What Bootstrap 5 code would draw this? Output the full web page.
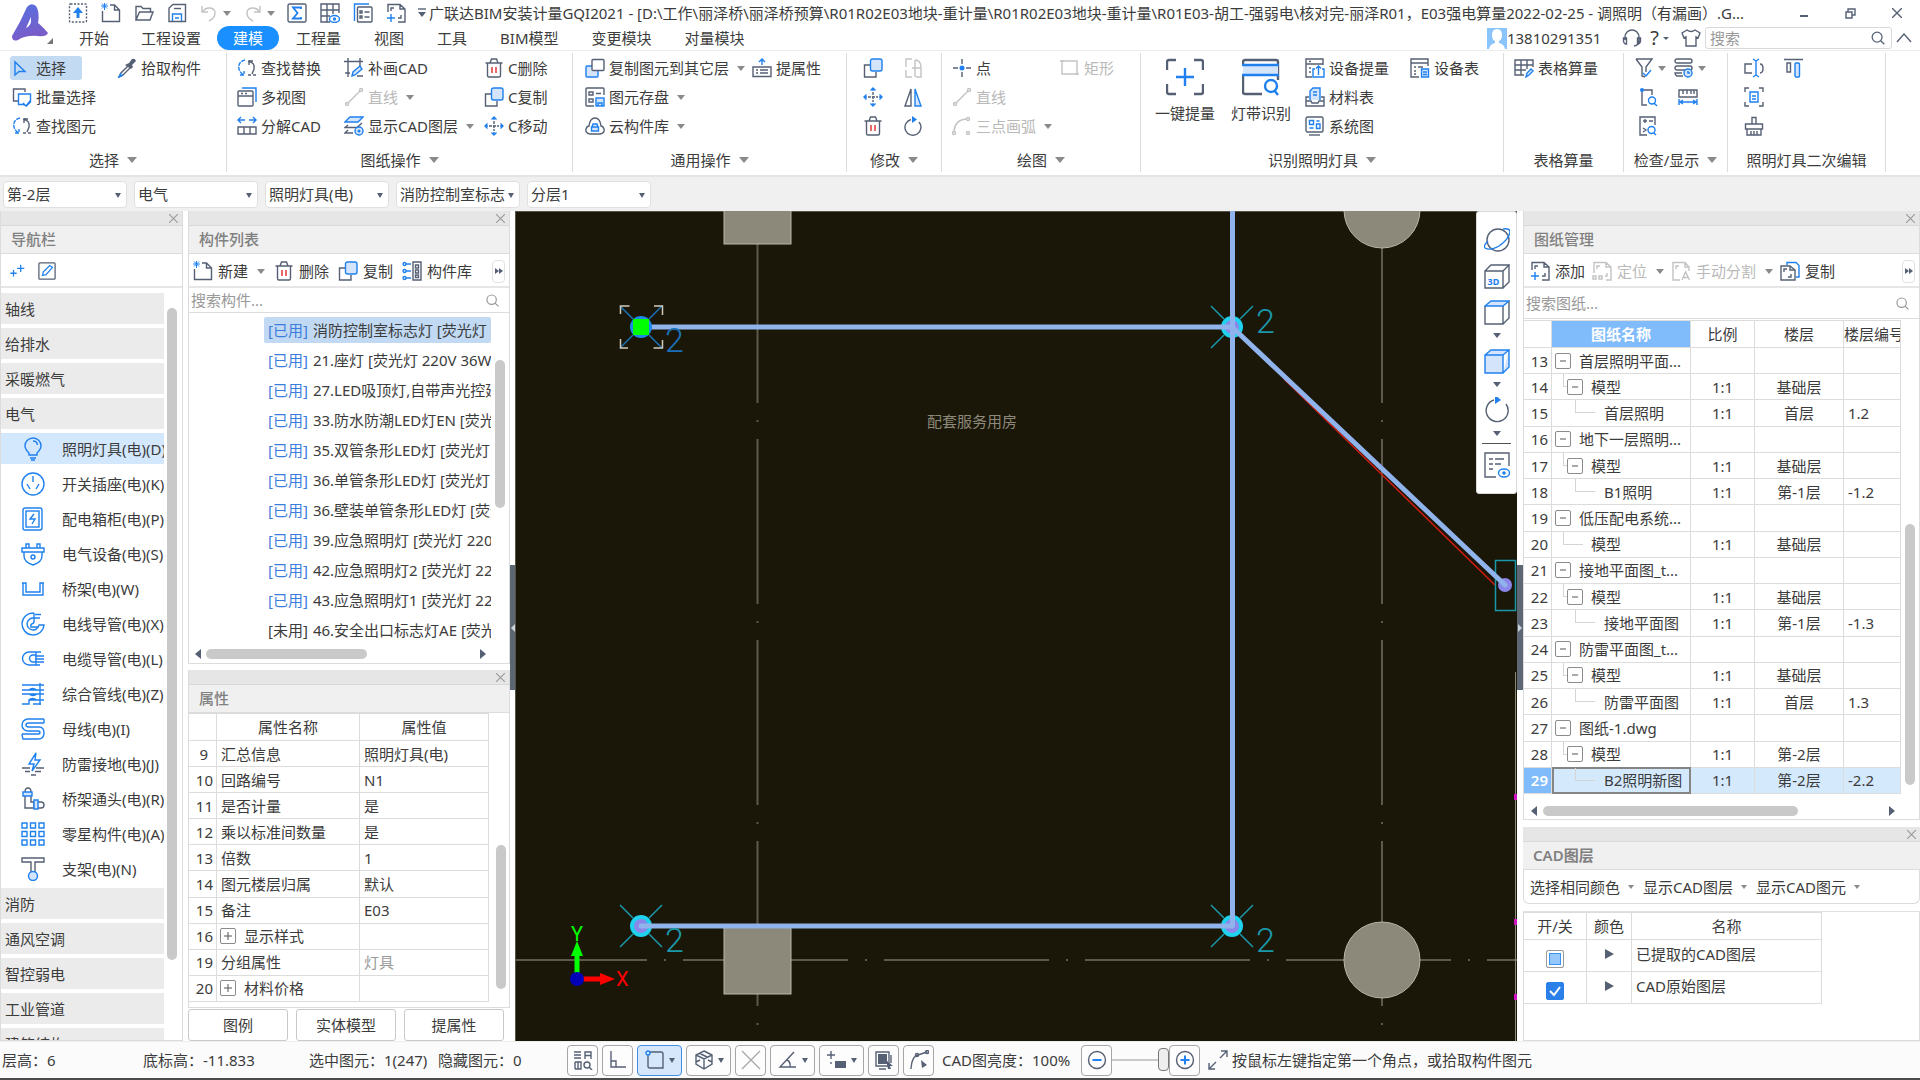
<!DOCTYPE html>
<html lang="zh-CN">
<head>
<meta charset="utf-8">
<meta name="viewport" content="width=device-width, initial-scale=1">
<title>广联达BIM安装计量GQI2021</title>
<link href="https://cdn.jsdelivr.net/npm/bootstrap@5.3.0/dist/css/bootstrap.min.css" rel="stylesheet">
<style>
:root{--ink:#3c3c3c;--ic:#566074;--bl:#1f80ee;--ln:#dcdcdc}
body{font-family:"Noto Sans","Noto Sans CJK SC",sans-serif;font-size:15px;line-height:20px;color:var(--ink);background:#fff}
button,input,select{font:inherit;color:inherit}
button{background:none;border:0;padding:0}
a{color:inherit;text-decoration:none}
svg{display:block;flex:none;overflow:visible}
.ico{width:20px;height:20px;fill:none;stroke:var(--ic);stroke-width:1.4;color:var(--ic)}
.ico18{width:18px;height:18px}
.ico24{width:24px;height:24px}
.ico26{width:26px;height:26px}
.ico38{width:38px;height:38px}
.b{stroke:var(--bl)}.bf{fill:var(--bl);stroke:none}.lf{fill:#d4e5fb}.kf{fill:#566074;stroke:none}.r{stroke:#e02b2b}.w{fill:#fff}
.off{color:#b9b9b9}.off .ico{stroke:#c3c3c3}
.dn{width:0;height:0;border:4px solid transparent;border-top:5px solid #8a8a8a;border-bottom:0;flex:none}
.dn.dk{border-top-color:#566074}
/* header */
.apphead{height:51px;border-bottom:1px solid #ececec}
.logo{width:63px}
.titlerow{height:26px}
.qbar{padding-left:5px;gap:12px}
.qset{display:flex;gap:13px}
.apptitle{margin-left:3px}
.winbtns{gap:36px;padding-right:18px}
.tabs a{padding:2px 16px;height:24px;border-radius:12px}
.tabs a.active{background:#1a8fff;color:#fff}
.tabs a.active~a{margin-left:1px}
.topsearch{width:187px;height:22px;border:1px solid #d9d9d9;border-radius:3px}
.topsearch input,.psearch input{border:0;outline:0;background:none;min-width:0}
input::placeholder{color:#999;opacity:1}
/* ribbon */
.ribbon{height:126px;padding-top:2px;border-bottom:2px solid #e4e4e4}
.grp{height:119px;border-right:1px solid #dcdcdc;padding-top:3px}
.g1{width:227px}.g2{width:346px}.g3{width:274px}.g4{width:95px}.g5{width:199px}.g6{width:363px}.g7{width:120px}.g8{width:104px}.g9{width:158px}
.grp .cols{height:92px;padding-left:8px}
.rc{display:flex;flex-direction:column;align-items:flex-start;gap:5px}
.rb{display:inline-flex;align-items:center;gap:4px;height:24px;padding:0 2px;border-radius:3px;white-space:nowrap}
.rb.on{background:#c3daf3;width:72px}
.rb .dn{margin-left:4px}
.w40{width:40px}.w107{width:107px}.w108{width:108px}.w140{width:140px}.w105{width:105px}.w167{width:167px}
.big{display:flex;flex-direction:column;align-items:center;width:76px;padding-top:2px;gap:7px}
.glabel{height:24px;gap:8px;display:flex;align-items:center;justify-content:center}
.glabel .dn{border-width:5px;border-top-width:6px;border-bottom-width:0}
/* selectors */
.combos{height:34px;background:#f0f0f0;padding:0 3px;gap:7px}
.combo{position:relative;width:124px}
.combo select{appearance:none;width:100%;height:27px;border:1px solid #e0e0e0;border-radius:4px;background:#fff;padding:0 14px 0 3px}
.combo::after{content:"";position:absolute;right:6px;top:12px;border:3px solid transparent;border-top:5px solid #566074;border-bottom:0}
/* panels */
.strip{height:15px;background:#e6e6e6;border-bottom:1px solid #d9d9d9;padding-right:4px;flex:none}
.strip .ico{width:9px;height:9px;stroke:#999;stroke-width:1.2}
.ptitle{height:28px;background:#f0f0f0;color:#808080;font-weight:500;padding:0 10px 1px;border-bottom:1px solid var(--ln);flex:none}
.pbar{height:34px;padding-top:2px;border-bottom:2px solid #e6e6e6;flex:none}
.pbar>button{display:flex;align-items:center;gap:5px}
.pane{border:1px solid var(--ln);border-top:0}
.navcol{width:183px}.listcol{width:322px}.rightcol{width:397px}
.gapl{width:5px}.gapr{width:6px}.gapr,.gapl{padding-top:354px}
.grip{height:125px;background:#5d6773}
.sb{width:10px;border-radius:5px;background:#c9c9c9}
.sbh{height:10px;border-radius:5px;background:#c9c9c9}
.tri{width:0;height:0;border:5px solid transparent}
.tri.l{border-right:6px solid #566074;border-left:0}
.tri.rt{border-left:6px solid #566074;border-right:0}
.navlist{padding-top:5px}
.navlist .items{width:163px;display:flex;flex-direction:column;gap:4px}
.navlist a{height:31px;flex:none;display:flex;align-items:center;white-space:nowrap;overflow:hidden}
.nh{background:#ebebeb;padding-left:4px}
.ni{padding-left:20px;gap:17px}
.ni.active{background:#d3e7fd}
.psearch{height:25px;border-bottom:1px solid var(--ln);padding:0 8px 0 2px;flex:none}
.psearch .ico{width:17px;height:17px;stroke:#999}
.comps{width:227px;margin-left:75px;padding-top:4px;gap:4px}
.comps a{height:26px;flex:none;display:block;padding:3px 4px;white-space:nowrap;overflow:hidden;border-radius:2px}
.comps a.active{background:#c1d9f2}
.comps i{font-style:normal;color:#3b7ddd;margin-right:5px}
.comps i.un{color:inherit}
.grid{--bs-table-bg:transparent;table-layout:fixed;border-collapse:collapse;margin:0;color:var(--ink);border-color:var(--ln)}
.grid th,.grid td{padding:0 4px;border:1px solid var(--ln);font-weight:400;white-space:nowrap;overflow:hidden;vertical-align:middle;color:var(--ink);line-height:20px}
.grid th{text-align:center}
.grid thead tr{height:27px}
.props{width:300px;height:289px}
.grid .no{padding:0 3px 0 0;text-align:right}
.pm{display:inline-flex;width:16px;height:16px;border:1px solid #8b8b8b;border-radius:2px;align-items:center;justify-content:center;vertical-align:top;margin:2px 8px 0 0;background:#fff}
.pm svg{width:8px;height:8px;stroke:#555;stroke-width:1}
.grid .exp{padding-left:3px}
.pbtn{height:32px;width:100px;border:1px solid #c9c9c9;border-radius:3px}
.draws{width:377px;height:474px;margin-left:-1px}
.draws th{padding:0}
.draws td:nth-child(3),.draws td:nth-child(4){text-align:center}
.draws .l0{padding-left:3px}.draws .l1{padding-left:15px;position:relative}.draws .l2{padding-left:52px;position:relative}
.draws .l1.leaf{padding-left:39px}
.draws .l1::before,.draws .l2::before{content:"";position:absolute;left:11px;top:0;width:4px;height:13px;border:1px solid #d5d5d5;border-width:0 0 1px 1px}
.draws .l1.leaf::before{width:20px}
.draws .l2::before{left:23px;width:20px}
.draws .cur td{background:#d5e9fd}
.draws th.hd,.draws .cur td.hd{background:#80bcfb;color:#fff;font-weight:600}
.draws .cur td.l2{outline:2px solid #858585;outline-offset:-2px}
.pbar>.more{width:13px;height:23px;border:1px solid #e2e2e2;border-radius:4px;gap:0;justify-content:center;margin:0 4px 0 auto}
.more .tri{border-width:3px 0 3px 4px}
.layers{width:298px}
.layers td{height:32px}
.layers td:nth-child(3){padding-bottom:3px}
.layers .tri{border-left-width:9px;display:block;margin:0 auto 3px}
.layerbar{height:34px;padding-left:6px;gap:9px}
.layerbar .dn{border-width:4px 3px 0}
.ck{appearance:none;width:18px;height:18px;border:1px solid #9a9a9a;border-radius:2px;display:block;margin:6px auto 0;background:#fff}
.ck.part{background:#97c8fb;box-shadow:inset 0 0 0 2px #fff,inset 0 0 0 3px #3b93f0}
.ckw{position:relative}
.ck.yes{background:#2a80e8;border-color:#2a80e8}
.ckw svg{position:absolute;left:50%;top:50%;width:14px;height:14px;margin:-4px 0 0 -7px;fill:none;stroke:#fff;stroke-width:2;pointer-events:none}
/* drawing area */
.stage{background:#1a1608;position:relative;overflow:hidden}
.stage>svg{width:100%;height:100%;position:absolute;inset:0}
.stage text{font-family:Roboto,"Noto Sans CJK SC",sans-serif}
.float{position:absolute;right:0;top:0;width:41px;height:283px;background:#fff;border:1px solid #d9d9d9;border-radius:3px;padding-top:15px;display:flex;flex-direction:column;align-items:center;gap:10px}
.float .set{display:flex;flex-direction:column;align-items:center;gap:8px}
.float hr{width:29px;margin:-3px 0 -2px;border-top:1px solid #555;opacity:1}
.tag3d{font-size:9px;line-height:14px;color:var(--bl)}
/* status */
.status{height:39px;background:#fbfbfb;border-bottom:2px solid #4c4c4c;border-top:1px solid #eee;padding-left:2px}
.sbtn{height:31px;min-width:31px;border:1px solid #a6a6a6;border-radius:4px;display:inline-flex;align-items:center;justify-content:center;gap:4px;background:#fdfdfd;flex:none}
.sbtn.dd{width:45px}
.sbtn.on{background:#d6e7fb;border-color:#3f8fe8}
.sbtn .dn{border-width:3px;border-top-width:5px;border-bottom-width:0}
.s1{width:141px}.s2{width:166px}.s3{width:129px}.s4{width:129px}.s5{width:139px}
.tools{gap:4px}
.bright{width:57px;height:24px;appearance:none;background:none;margin:0}
.bright::-webkit-slider-runnable-track{height:2px;background:#c9c9c9}
.bright::-webkit-slider-thumb{-webkit-appearance:none;width:11px;height:23px;margin-top:-11px;border:1px solid #777;border-radius:4px;background:#eee}
</style>
<script src="https://cdn.jsdelivr.net/npm/bootstrap@5.3.0/dist/js/bootstrap.bundle.min.js"></script>
</head>
<body class="vh-100 d-flex flex-column overflow-hidden">
<svg width="0" height="0" class="position-absolute" aria-hidden="true"><defs>
<symbol id="x" viewBox="0 0 10 10"><path d="M0 0l10 10M10 0L0 10"/></symbol>
<symbol id="mag" viewBox="0 0 20 20"><circle cx="9" cy="9" r="5.5"/><path d="M13 13l4 4"/></symbol>
<symbol id="up" viewBox="0 0 20 20"><rect x="1.500" y="1" width="17" height="18" rx="1" stroke-dasharray="2 1.500"/><path class="bf" d="M10 4l5 6h-3.500v5h-3v-5H5z"/></symbol>
<symbol id="new" viewBox="0 0 20 20"><path d="M1.500 8v10.500h17V7l-5-5H9M13.500 2v5h5"/><path class="b" stroke-width="1" d="M0 3h7M3.500 0v7M1 .500l5 5M6 .500l-5 5"/></symbol>
<symbol id="open" viewBox="0 0 20 20"><path d="M2 17V3.500h5l2 2h7.500V9M2 17L5.500 9H19l-3 8z"/></symbol>
<symbol id="save" viewBox="0 0 20 20"><path d="M2 18.500V5l4-3.500h12.500v17z"/><path class="b" d="M5.500 18v-7h9v7M8 15h4"/><path d="M7 5.500h7"/></symbol>
<symbol id="undo" viewBox="0 0 20 20"><path d="M3 3v6h6M3.500 9C7 3 16 4 16 10c0 4-2 6-6 8"/></symbol>
<symbol id="redo" viewBox="0 0 20 20"><path d="M17 3v6h-6M16.500 9C13 3 4 4 4 10c0 4 2 6 6 8"/></symbol>
<symbol id="sum" viewBox="0 0 20 20"><rect x="1" y="1" width="18" height="18" rx="1.500"/><path class="b" stroke-width="1.800" d="M14 6V4.500H6L10.500 10 6 15.500h8V14"/></symbol>
<symbol id="gridv" viewBox="0 0 20 20"><path d="M19 10V1H1v18h9M1 7h18M1 13h9M7 1v18M13 1v10"/><ellipse class="b" cx="14.500" cy="16" rx="5" ry="3.500"/><circle class="b" cx="14.500" cy="16" r="1"/></symbol>
<symbol id="lists" viewBox="0 0 20 20"><path class="b" d="M16 1H1.500v17"/><rect x="4.500" y="4" width="14.500" height="15" rx="1"/><path d="M7 8h2v2H7zM7 13h2v2H7zM11.500 9h5M11.500 14h5"/></symbol>
<symbol id="addpg" viewBox="0 0 20 20"><path d="M2 9V1.500h12l5 4.500v13h-7M14 1.500V6h5M5 8V5h3M15 12v3h-3"/><path class="b" d="M5 11v8M1 15h8"/></symbol>
<symbol id="cursor" viewBox="0 0 20 20"><path class="b" d="M3 4v13l4-3.500h6z"/></symbol>
<symbol id="multi" viewBox="0 0 20 20"><path d="M7 14H1.500V2H13v3"/><path class="b w" d="M6.500 7h12v8l-4 4-3-1.500H6.500zM11 16l3 3 4-5"/></symbol>
<symbol id="cyc" viewBox="0 0 20 20"><path class="b" d="M8 2C3 3 1 7 2 11s3 4 4 6M3 17h4v-4" stroke-dasharray="4 1"/><path d="M11 3c5 1 7 4 6 8l-2 5M11 17h3M16 17h3M12 3v4M12 3h4"/></symbol>
<symbol id="drop" viewBox="0 0 20 20"><path class="kf" d="M10 6l2-1 3-4q3-1 4 2l-4 4 1 2-2 2-6-4z"/><path d="M11 8l-7 7-2 4 4-2 7-7"/><path class="b" d="M4 15l-2 4 4-2"/></symbol>
<symbol id="win" viewBox="0 0 20 20"><path class="b" d="M5 1h14v14"/><rect x="1" y="4" width="15" height="15" rx="1"/><path d="M1 9h15M4 6.500h2M8 6.500h2"/></symbol>
<symbol id="split" viewBox="0 0 20 20"><path d="M1 18v-7h18v7zM7 11v7M13 11v7"/><path class="b" d="M1 4h7M12 4h7M4 1L1 4l3 3M16 1l3 3-3 3"/></symbol>
<symbol id="cad" viewBox="0 0 20 20"><path d="M0 3.500h19M4 0v19M1 15h5M16 0v8M13 18h6"/><path class="b lf" d="M8 18l1-4 7-6 2 3-7 6z"/></symbol>
<symbol id="line" viewBox="0 0 20 20"><circle cx="3" cy="17" r="1.500"/><circle cx="17" cy="3" r="1.500"/><path d="M4 16L16 4"/></symbol>
<symbol id="layers" viewBox="0 0 20 20"><path class="b lf" d="M6 1h13l-5 5H1z"/><path d="M4 9l-3 2.500h12l5-4.500M4 14l-3 3h8"/><circle class="b lf" cx="15" cy="15" r="4"/><circle class="bf" cx="15" cy="15" r="1.500"/></symbol>
<symbol id="bin" viewBox="0 0 20 20"><path d="M1.500 5h17M3.500 5v12.500q0 1.500 1.500 1.500h10q1.500 0 1.500-1.500V5M6 5l1.500-4h5L14 5"/><path class="r" d="M8 9v6M12 9v6"/></symbol>
<symbol id="copy" viewBox="0 0 20 20"><path d="M7 7H1.500v12H13v-5"/><rect class="b lf" x="7.500" y="1" width="11.500" height="12" rx="2"/></symbol>
<symbol id="copy2" viewBox="0 0 20 20"><rect class="b lf" x="1" y="8" width="12" height="11" rx="1"/><rect class="w" x="7" y="1.500" width="12" height="11" rx="1"/></symbol>
<symbol id="move" viewBox="0 0 20 20"><path d="M10 5v10M5 10h10" stroke-dasharray="3 1"/><path class="b" d="M7.500 3.500L10 1l2.500 2.500M7.500 16.500L10 19l2.500-2.500M3.500 7.500L1 10l2.500 2.500M16.500 7.500L19 10l-2.500 2.500M10 1v3M10 19v-3M1 10h3M19 10h-3"/></symbol>
<symbol id="store" viewBox="0 0 20 20"><path d="M9 19H2q-1 0-1-1V2q0-1 1-1h16q1 0 1 1v6M4 5h4v3H4zM4 12h4v3H4zM11 6.500h5"/><rect class="b lf" x="11" y="11" width="8" height="8"/><path class="b" d="M13 19v-3h4v3"/></symbol>
<symbol id="cloud" viewBox="0 0 20 20"><path d="M5 18q-5-1-4-5 1-3 3-3 1-8 6-8t6 8q2 0 3 3 1 4-4 5z"/><path class="b lf" d="M6.500 11h7v4h-7zM8 8h4l1 3H7z"/></symbol>
<symbol id="attr" viewBox="0 0 20 20"><path d="M1 18.500V9h18v9.500zM4 12h2M8 12h8M4 15h2M8 15h8"/><path class="b" d="M10 7V1M7 4l3-3 3 3"/></symbol>
<symbol id="doc2" viewBox="0 0 20 20"><path d="M9 1H3v8M3 12v7h6M12 2q6 0 6 8v9h-5M9 10h9M12 2v17"/></symbol>
<symbol id="mirror" viewBox="0 0 20 20"><path d="M8 2v17H2z"/><path class="b lf" d="M12 2v17h6z"/></symbol>
<symbol id="rot" viewBox="0 0 20 20"><path d="M8 3.500a8 8 0 1 0 8 2.500"/><path class="bf" d="M9 0l5 3.500L9 7z"/></symbol>
<symbol id="pt" viewBox="0 0 20 20"><path d="M10 1v5M10 14v5M1 10h5M14 10h5"/><circle class="bf" cx="10" cy="10" r="2.500"/></symbol>
<symbol id="rect" viewBox="0 0 20 20"><path d="M2 3h15v13H2z"/><path d="M0 3h4M15 16h4"/></symbol>
<symbol id="arc" viewBox="0 0 20 20"><circle cx="2" cy="17" r="1.500"/><circle cx="16" cy="3" r="1.500"/><circle cx="16" cy="17" r="1.500"/><path d="M2 15Q3 4 14 3"/></symbol>
<symbol id="onekey" viewBox="0 0 38 38"><g stroke-width="2.400"><path d="M1 12V4q0-2 2-2h7M28 2h7q2 0 2 2v8M37 26v8q0 2-2 2h-7M10 36H3q-2 0-2-2v-8"/><path class="b" d="M19 10v18M10 19h18"/></g></symbol>
<symbol id="strip" viewBox="0 0 38 38"><g stroke-width="2.400"><path d="M1 8V4q0-2 2-2h31q2 0 2 2v18M1 16v18q0 2 2 2h17"/><path class="lf" stroke="none" d="M1 8h35v9H1z"/><path class="b" d="M0 7h37M0 17h37"/><circle class="b" cx="29" cy="28" r="6"/><path class="b" d="M32 32l4 5"/></g></symbol>
<symbol id="eqx" viewBox="0 0 20 20"><path d="M7 19H1V1h17v6M1 6h17M4 3.500h2M4 10h2M4 14h2"/><path class="b" d="M10 11H8v8h11v-8h-2M13.500 17V8M11 10.500L13.500 8l2.500 2.500"/></symbol>
<symbol id="eqt" viewBox="0 0 20 20"><path d="M9 19H1V1h17v7M1 5h17M4 9h2M8 9h5M4 13h2M4 16h2"/><path class="b lf" d="M11.500 11h7v8h-7zM13 14h4M13 16.500h4"/></symbol>
<symbol id="mat" viewBox="0 0 20 20"><path d="M4 10H1v9h18v-9h-3M1 14h5l1 2h6l1-2h5"/><path class="b lf" d="M5 13V4l3-3h7v12M8 5h4M8 8h4"/></symbol>
<symbol id="sys" viewBox="0 0 20 20"><rect x="1" y="1" width="17" height="15" rx="1.500"/><path class="b" d="M4.500 4.500h4v4h-4zM4.500 12h4M11.500 5h3M11.500 8h3.500v4.500h-3.500z"/><path d="M4 19h11"/></symbol>
<symbol id="tbl" viewBox="0 0 20 20"><path d="M10 17H1V2h18v7M1 7h18M1 12h11M7 2v15M13 2v9"/><path class="b lf" d="M12 19l1-4 4-4 2 2-4 4z"/></symbol>
<symbol id="filt" viewBox="0 0 20 20"><path d="M2 1h16l-6 8v5M2 1l6 8v9l3 1"/><path class="b" d="M9 15l3 3 5-6"/></symbol>
<symbol id="bars" viewBox="0 0 20 20"><rect x="1" y="1" width="17" height="4" rx="2"/><rect x="1" y="8" width="17" height="4" rx="2"/><path d="M9 18H3q-2-1-2-3h7"/><circle class="b lf" cx="14" cy="15" r="4"/><path class="b" d="M14 13v2h2"/></symbol>
<symbol id="find1" viewBox="0 0 20 20"><path d="M5 3h9v5M4 4v14h5"/><circle class="bf" cx="4" cy="3" r="2"/><circle class="b" cx="14" cy="13.500" r="3.500"/><path class="b" d="M16 16l3 3"/></symbol>
<symbol id="ruler" viewBox="0 0 20 20"><path d="M1 3h18v7H1zM5 3v4M9 3v4M13 3v4M16 3v4"/><path class="b" d="M1 12v6M19 12v6M2 15h16M5 13l-3 2 3 2M15 13l3 2-3 2"/></symbol>
<symbol id="calc" viewBox="0 0 20 20"><path d="M9 19H2V1h15v8M5 5h4M7 3v4M11 5h4M5 12l3 2-3 2"/><circle class="b" cx="13.500" cy="14" r="3.500"/><path class="b" d="M16 17l2 2"/></symbol>
<symbol id="brk" viewBox="0 0 20 20"><path d="M8 6H1v9h7M16 6q3 0 3 4.500T16 15"/><path class="b" d="M12 2v16M9 1l3 2 3-2M9 19l3-2 3 2"/></symbol>
<symbol id="align" viewBox="0 0 20 20"><path d="M0 1.500h19M3 5h3.500v9H3z"/><rect class="b lf" x="11" y="5" width="4.500" height="14" rx="1"/></symbol>
<symbol id="focus" viewBox="0 0 20 20"><path d="M1 5V1h4M15 1h4v4M19 15v4h-4M5 19H1v-4"/><path class="b" d="M6 5h8v10H6zM8 9h4M8 12h4"/></symbol>
<symbol id="brush" viewBox="0 0 20 20"><path d="M8 8V1.500h4V8M1.500 13V8h17v5zM3 13v6h14v-6M7 15v4M10 15v4M13 15v4"/></symbol>
<symbol id="head" viewBox="0 0 20 20"><path d="M3 12V9a7 7 0 0 1 14 0v4q0 4-5 5M1.500 10h3v6h-1q-2-1-2-3zM18.500 10h-3v6h1q2-1 2-3z"/></symbol>
<symbol id="shirt" viewBox="0 0 20 20"><path d="M6 2L1 5l2 5 2-1v9h10V9l2 1 2-5-5-3q-4 3-8 0z"/></symbol>
<symbol id="plus2" viewBox="0 0 20 20"><path class="b" d="M5 9v7M1.500 12.500h7M13 3v8M9 7h8"/></symbol>
<symbol id="edit" viewBox="0 0 20 20"><rect x="1" y="1" width="18" height="18" rx="1"/><path class="b" d="M5 15l1-4 7-7 3 2-7 8z"/></symbol>
<symbol id="lib" viewBox="0 0 20 20"><path class="b" d="M4 3h5M4 10h5M4 17h5"/><circle class="b" cx="2.500" cy="3" r="1.500"/><circle class="b" cx="2.500" cy="10" r="1.500"/><circle class="b" cx="2.500" cy="17" r="1.500"/><path d="M11 1h8v18h-8zM13.500 4h3v3h-3zM13.500 9h3v3h-3zM13.500 14h3v2.500h-3z"/></symbol>
<symbol id="loc" viewBox="0 0 20 20"><path d="M2 12V1.500h12l5 4.500v13h-5M14 1.500V6h5M5 8V5h3M15 12v3h-2M1 15h3v3H1zM7 15h3v3H7z"/></symbol>
<symbol id="pa" viewBox="0 0 20 20"><path d="M9 19H2V1.500h12l4 4.500v4M14 1.500V6h4M5 8V5h3M11 19l3.500-8 4 8M12 16.500h5"/></symbol>
<symbol id="pcopy" viewBox="0 0 20 20"><path class="b" d="M7 4V1.500h9l3 3V16h-3"/><path class="w" d="M1 19V5h9l5 4v10z"/><path d="M10 5v4h5M4 11V8h3M11 13v3H8"/></symbol>
<symbol id="n1" viewBox="0 0 24 24"><g class="b"><path d="M8 16Q4 12 4 9a8 8 0 0 1 16 0q0 3-4 7v2H8zM9 21h6M10 23h4M12 4q4 0 4.500 4"/></g></symbol>
<symbol id="n2" viewBox="0 0 24 24"><g class="b"><circle cx="12" cy="12" r="11"/><path d="M12 4v6M6 12l3 5M18 12l-3 5"/></g></symbol>
<symbol id="n3" viewBox="0 0 24 24"><g class="b"><rect x="2" y="1" width="19" height="22" rx="2"/><rect x="5" y="4" width="13" height="16"/><path d="M13 7l-4 5h5l-3 5"/></g></symbol>
<symbol id="n4" viewBox="0 0 24 24"><g class="b"><path d="M1 6h22v4H1zM5 6V2h3v4M16 6V2h3v4M3 10v4q0 6 9 9 9-3 9-9v-4"/><circle cx="12" cy="15" r="2"/></g></symbol>
<symbol id="n5" viewBox="0 0 24 24"><path class="b" d="M1 6h4v9h14V6h4M2 6v12h20V6"/></symbol>
<symbol id="n6" viewBox="0 0 24 24"><g class="b"><path d="M13 1a11 11 0 1 0 10 12h-5a6 6 0 1 1-5-7h6M13 1v10M13 11q-4 1-3 4h8M14 2.500h6"/></g></symbol>
<symbol id="n7" viewBox="0 0 24 24"><g class="b"><path d="M20 5H8a6.500 6.500 0 0 0 0 13h11M12 8a3.500 3.500 0 0 0 0 7h4M12 8h3M15 5v13M14 9h9M14 12h9M14 15h9"/></g></symbol>
<symbol id="n8" viewBox="0 0 24 24"><g class="b"><path d="M1 3h22M1 8h22M1 12h22M19 1v22M1 22h7v-4h15M8 18q3-3 8 0M8 8q3-3 8 0M8 12q4 3 8 0M12 22h8"/></g></symbol>
<symbol id="n9" viewBox="0 0 24 24"><path class="b" d="M23 2H7a5.500 5.500 0 0 0 0 12h10q2 0 2 1.500T17 17H1M23 6H8q-3 0-3 2t3 2h10q5 0 5 6t-6 6H2q-1-3-1-5M23 2v4"/></symbol>
<symbol id="n10" viewBox="0 0 24 24"><path class="b" d="M15 1L8 12h5l-2 7 8-11h-5z"/><path d="M1 16h8M15 16h8M4 19.500h5M14 19.500h6M10 23h5"/></symbol>
<symbol id="n11" viewBox="0 0 24 24"><path d="M4 5q0-4 3-4t3 4v10h3v6H4zM17 15h3q3 0 3 3t-3 3h-3"/><path class="b lf" d="M2 5h9v4H2zM13 13h4v9h-4z"/></symbol>
<symbol id="n12" viewBox="0 0 24 24"><path class="b" d="M1 1h5v5H1zM9.500 1h5v5h-5zM18 1h5v5h-5zM1 9.500h5v5H1zM9.500 9.500h5v5h-5zM18 9.500h5v5h-5zM1 18h5v5H1zM9.500 18h5v5h-5zM18 18h5v5h-5z"/></symbol>
<symbol id="n13" viewBox="0 0 24 24"><path d="M1 1h22v4h-9v10h-4V5H1z"/><circle class="b lf" cx="12" cy="19" r="4.500"/></symbol>
<symbol id="orbit" viewBox="0 0 26 26"><circle cx="14" cy="13" r="11"/><path class="b" d="M4 14Q-1 19 1 21 6 24 15 19 25 12 26 5 26 1 19 2"/></symbol>
<symbol id="cube" viewBox="0 0 26 26"><path d="M1 8h18v17H1zM1 8l6-6h18l-6 6M25 2v17l-6 6"/></symbol>
<symbol id="cubet" viewBox="0 0 26 26"><path d="M1 7v18h18V7M25 2v17l-6 6"/><path class="b lf" d="M1 7l6-5h18l-6 5z"/></symbol>
<symbol id="cubeb" viewBox="0 0 26 26"><path class="b lf" d="M1 7h18v18H1zM1 7l6-5h18l-6 5M25 2v17l-6 6"/></symbol>
<symbol id="rotb" viewBox="0 0 26 26"><path d="M10 3a11 11 0 1 0 12 4"/><path class="bf" d="M11-2l6 5-6 4z"/></symbol>
<symbol id="eye" viewBox="0 0 26 26"><path d="M12 25H1V1h24v13M5 7h4M11 7h9M5 12h4M11 12h6M5 17h4"/><ellipse class="b" cx="20" cy="21" rx="5.500" ry="4"/><circle class="bf" cx="20" cy="21" r="1.800"/></symbol>
<symbol id="t1" viewBox="0 0 20 20"><path d="M1 2h7M1 5h7M1 8h7M12 9V2h6v7M12 5.500h6M2 12v7M2 12h6v7H2M5 12v7"/><circle cx="14" cy="15" r="3"/><path d="M16 17l3 3"/></symbol>
<symbol id="t2" viewBox="0 0 20 20"><path d="M3 1v16h15M3 11h5v6"/></symbol>
<symbol id="t3" viewBox="0 0 20 20"><path d="M4 2h12q2 0 2 2v14H5q-2 0-2-2V5"/><circle class="b lf" cx="3" cy="3" r="2"/></symbol>
<symbol id="t4" viewBox="0 0 20 20"><path d="M10 1l8 4v9l-8 5-8-5V5zM2 5l8 4 8-4M10 9v10M5 3l8 4M2 12l4-2M18 12l-4-2"/></symbol>
<symbol id="t5" viewBox="0 0 20 20"><path stroke="#aaa" d="M1 1l18 18M19 1L1 19"/></symbol>
<symbol id="t6" viewBox="0 0 20 20"><path d="M16 2L2 17h16M9 10q4 2 3 7"/></symbol>
<symbol id="t7" viewBox="0 0 20 20"><path d="M4 1v8M0 5h8M4 12v2"/><path class="kf" d="M8 11h11v7H8z"/></symbol>
<symbol id="t8" viewBox="0 0 20 20"><path d="M2 2h13v14H2zM5 19h7M17 5v8"/><path class="kf" d="M4 4h9v10H4zM12 10l7 6-3 0 1 3-3 0z"/></symbol>
<symbol id="t9" viewBox="0 0 20 20"><path d="M2 18Q3 6 9 5L18 2M2 18v1"/><circle cx="8" cy="5" r="1.500"/><circle cx="18" cy="2" r="1.500"/><path class="kf" d="M12 10l6 5-5 3z"/></symbol>
<symbol id="zo" viewBox="0 0 20 20"><circle cx="10" cy="10" r="8.500"/><path class="b" stroke-width="2" d="M5.500 10h9"/></symbol>
<symbol id="zi" viewBox="0 0 20 20"><circle cx="10" cy="10" r="8.500"/><path class="b" stroke-width="2" d="M5.500 10h9M10 5.500v9"/></symbol>
<symbol id="diag" viewBox="0 0 20 20"><path d="M12 8l7-7M13 1h6v6M8 12l-7 7M1 13v6h6"/></symbol>
<linearGradient id="lg" x1="0" y1="0" x2="0.300" y2="1"><stop offset="0" stop-color="#5570e0"/><stop offset="1" stop-color="#7a5cc8"/></linearGradient>
</defs></svg>

<header class="apphead d-flex flex-shrink-0">
  <button class="logo flex-shrink-0" aria-label="应用菜单"><svg width="63" height="50" viewBox="0 0 63 50"><path fill="url(#lg)" fill-rule="evenodd" d="M27 7Q31 2 36 6Q40 12 38 23Q42 26 48 33Q46 37 38 36Q26 35 18 40Q12 42 12 36Q20 23 27 7ZM31 17L26 28Q30 26 31 22Z"/><path fill="#777" d="M53 38v6h-6z"/></svg></button>
  <div class="flex-grow-1 d-flex flex-column">
    <div class="titlerow d-flex align-items-center">
      <div class="qbar d-flex align-items-center">
        <div class="qset">
        <button aria-label="上传"><svg class="ico"><use href="#up"/></svg></button>
        <button aria-label="新建"><svg class="ico"><use href="#new"/></svg></button>
        <button aria-label="打开"><svg class="ico"><use href="#open"/></svg></button>
        <button aria-label="保存"><svg class="ico"><use href="#save"/></svg></button>
        </div>
        <button class="off d-flex align-items-center gap-1" aria-label="撤销"><svg class="ico"><use href="#undo"/></svg><span class="dn"></span></button>
        <button class="off d-flex align-items-center gap-1" aria-label="恢复"><svg class="ico"><use href="#redo"/></svg><span class="dn"></span></button>
        <div class="qset">
        <button aria-label="汇总"><svg class="ico"><use href="#sum"/></svg></button>
        <button aria-label="表格"><svg class="ico"><use href="#gridv"/></svg></button>
        <button aria-label="列表"><svg class="ico"><use href="#lists"/></svg></button>
        <button aria-label="添加图纸"><svg class="ico"><use href="#addpg"/></svg></button>
        </div>
        <svg class="ico" style="width:8px;height:10px" viewBox="0 0 8 10"><path d="M0 1h8"/><path class="kf" d="M0 4h8l-4 5z"/></svg>
      </div>
      <div class="apptitle flex-grow-1 text-nowrap">广联达BIM安装计量GQI2021 - [D:\工作\丽泽桥\丽泽桥预算\R01R02E03地块-重计量\R01R02E03地块-重计量\R01E03-胡工-强弱电\核对完-丽泽R01，E03强电算量2022-02-25 - 调照明（有漏画）.G...</div>
      <div class="winbtns d-flex align-items-center">
        <button aria-label="最小化"><svg class="ico" style="width:9px;height:10px" viewBox="0 0 9 10"><path stroke-width="2" d="M0 8h8"/></svg></button>
        <button aria-label="还原"><svg class="ico" style="width:11px;height:11px" viewBox="0 0 11 11"><path d="M1 4h6v6H1zM3 4V1h7v6H7"/></svg></button>
        <button aria-label="关闭"><svg class="ico" style="width:10px;height:10px"><use href="#x"/></svg></button>
      </div>
    </div>
    <div class="d-flex align-items-center">
      <nav class="tabs d-flex text-nowrap"><a href="#">开始</a><a href="#">工程设置</a><a href="#" class="active">建模</a><a href="#">工程量</a><a href="#">视图</a><a href="#">工具</a><a href="#">BIM模型</a><a href="#">变更模块</a><a href="#">对量模块</a></nav>
      <div class="ms-auto d-flex align-items-center">
        <svg width="20" height="21" viewBox="0 0 20 21"><path fill="#8ac4fa" d="M0 0h20v21H0z"/><path fill="#fff" d="M5 7q0-6 5-6t5 6q0 5-3 6v2q5 1 6 6H2q1-5 6-6v-2Q5 12 5 7z"/></svg>
        <span style="margin-right:21px">13810291351</span>
        <button class="me-2" aria-label="客服"><svg class="ico"><use href="#head"/></svg></button>
        <button class="me-2 d-flex align-items-center gap-1 fs-5" aria-label="帮助">?<span class="dn dk" style="border-width:3px 3px 0"></span></button>
        <button class="mx-1" aria-label="皮肤"><svg class="ico"><use href="#shirt"/></svg></button>
        <label class="topsearch d-flex align-items-center px-1"><input class="flex-grow-1 p-0" placeholder="搜索" aria-label="搜索"><svg class="ico ico18"><use href="#mag"/></svg></label>
        <button class="ms-1 me-2" aria-label="收起"><svg class="ico" style="width:16px;height:16px" viewBox="0 0 16 16"><path d="M1 12l7-8 7 8"/></svg></button>
      </div>
    </div>
  </div>
</header>

<section class="ribbon d-flex flex-shrink-0">
  <div class="grp g1"><div class="cols d-flex" style="padding-left:10px">
    <div class="rc w107"><button class="rb on"><svg class="ico"><use href="#cursor"/></svg>选择</button><button class="rb"><svg class="ico"><use href="#multi"/></svg>批量选择</button><button class="rb"><svg class="ico"><use href="#cyc"/></svg>查找图元</button></div>
    <div class="rc"><button class="rb ps-0"><svg class="ico"><use href="#drop"/></svg>拾取构件</button></div>
  </div><div class="glabel">选择<span class="dn"></span></div></div>

  <div class="grp g2"><div class="cols d-flex">
    <div class="rc w107"><button class="rb"><svg class="ico"><use href="#cyc"/></svg>查找替换</button><button class="rb"><svg class="ico"><use href="#win"/></svg>多视图</button><button class="rb"><svg class="ico"><use href="#split"/></svg>分解CAD</button></div>
    <div class="rc w140"><button class="rb"><svg class="ico"><use href="#cad"/></svg>补画CAD</button><button class="rb off"><svg class="ico"><use href="#line"/></svg>直线<span class="dn"></span></button><button class="rb"><svg class="ico"><use href="#layers"/></svg>显示CAD图层<span class="dn"></span></button></div>
    <div class="rc"><button class="rb"><svg class="ico"><use href="#bin"/></svg>C删除</button><button class="rb"><svg class="ico"><use href="#copy"/></svg>C复制</button><button class="rb"><svg class="ico"><use href="#move"/></svg>C移动</button></div>
  </div><div class="glabel">图纸操作<span class="dn"></span></div></div>

  <div class="grp g3"><div class="cols d-flex" style="padding-left:10px">
    <div class="rc w167"><button class="rb"><svg class="ico"><use href="#copy2"/></svg>复制图元到其它层<span class="dn"></span></button><button class="rb"><svg class="ico"><use href="#store"/></svg>图元存盘<span class="dn"></span></button><button class="rb"><svg class="ico"><use href="#cloud"/></svg>云构件库<span class="dn"></span></button></div>
    <div class="rc"><button class="rb"><svg class="ico"><use href="#attr"/></svg>提属性</button></div>
  </div><div class="glabel">通用操作<span class="dn"></span></div></div>

  <div class="grp g4"><div class="cols d-flex" style="padding-left:14px">
    <div class="rc w40"><button class="rb" aria-label="复制"><svg class="ico"><use href="#copy"/></svg></button><button class="rb" aria-label="移动"><svg class="ico"><use href="#move"/></svg></button><button class="rb" aria-label="删除"><svg class="ico"><use href="#bin"/></svg></button></div>
    <div class="rc"><button class="rb off" aria-label="拉伸"><svg class="ico"><use href="#doc2"/></svg></button><button class="rb" aria-label="镜像"><svg class="ico"><use href="#mirror"/></svg></button><button class="rb" aria-label="旋转"><svg class="ico"><use href="#rot"/></svg></button></div>
  </div><div class="glabel">修改<span class="dn"></span></div></div>

  <div class="grp g5"><div class="cols d-flex">
    <div class="rc w108"><button class="rb"><svg class="ico"><use href="#pt"/></svg>点</button><button class="rb off"><svg class="ico"><use href="#line"/></svg>直线</button><button class="rb off"><svg class="ico"><use href="#arc"/></svg>三点画弧<span class="dn"></span></button></div>
    <div class="rc"><button class="rb off"><svg class="ico"><use href="#rect"/></svg>矩形</button></div>
  </div><div class="glabel">绘图<span class="dn"></span></div></div>

  <div class="grp g6"><div class="cols d-flex" style="padding-left:6px">
    <button class="big text-nowrap"><svg class="ico ico38"><use href="#onekey"/></svg>一键提量</button>
    <button class="big text-nowrap"><svg class="ico ico38"><use href="#strip"/></svg>灯带识别</button>
    <div class="rc w105 ms-1"><button class="rb"><svg class="ico"><use href="#eqx"/></svg>设备提量</button><button class="rb"><svg class="ico"><use href="#mat"/></svg>材料表</button><button class="rb"><svg class="ico"><use href="#sys"/></svg>系统图</button></div>
    <div class="rc"><button class="rb"><svg class="ico"><use href="#eqt"/></svg>设备表</button></div>
  </div><div class="glabel">识别照明灯具<span class="dn"></span></div></div>

  <div class="grp g7"><div class="cols d-flex">
    <div class="rc"><button class="rb"><svg class="ico"><use href="#tbl"/></svg>表格算量</button></div>
  </div><div class="glabel">表格算量</div></div>

  <div class="grp g8"><div class="cols d-flex">
    <div class="rc w40"><button class="rb" aria-label="过滤"><svg class="ico"><use href="#filt"/></svg><span class="dn ms-0"></span></button><button class="rb ms-1" aria-label="查找"><svg class="ico"><use href="#find1"/></svg></button><button class="rb ms-1" aria-label="计算式"><svg class="ico"><use href="#calc"/></svg></button></div>
    <div class="rc"><button class="rb" aria-label="图层显示"><svg class="ico"><use href="#bars"/></svg><span class="dn ms-0"></span></button><button class="rb ms-1" aria-label="测量"><svg class="ico"><use href="#ruler"/></svg></button></div>
  </div><div class="glabel">检查/显示<span class="dn"></span></div></div>

  <div class="grp g9"><div class="cols d-flex" style="padding-left:14px">
    <div class="rc w40"><button class="rb" aria-label="打断"><svg class="ico"><use href="#brk"/></svg></button><button class="rb" aria-label="定位"><svg class="ico"><use href="#focus"/></svg></button><button class="rb" aria-label="格式刷"><svg class="ico"><use href="#brush"/></svg></button></div>
    <div class="rc"><button class="rb" aria-label="对齐"><svg class="ico"><use href="#align"/></svg></button></div>
  </div><div class="glabel">照明灯具二次编辑</div></div>
</section>

<section class="combos d-flex align-items-center flex-shrink-0">
  <div class="combo"><select aria-label="楼层"><option>第-2层</option></select></div>
  <div class="combo"><select aria-label="专业"><option>电气</option></select></div>
  <div class="combo"><select aria-label="构件类型"><option>照明灯具(电)</option></select></div>
  <div class="combo"><select aria-label="构件"><option>消防控制室标志</option></select></div>
  <div class="combo"><select aria-label="分层"><option>分层1</option></select></div>
</section>

<main class="d-flex flex-grow-1 overflow-hidden">
  <aside class="navcol pane d-flex flex-column flex-shrink-0">
    <div class="strip d-flex align-items-center justify-content-end"><button aria-label="关闭"><svg class="ico"><use href="#x"/></svg></button></div>
    <div class="ptitle d-flex align-items-center">导航栏</div>
    <div class="pbar d-flex align-items-center ps-2" style="gap:11px"><button aria-label="添加"><svg class="ico ico18"><use href="#plus2"/></svg></button><button aria-label="编辑"><svg class="ico ico18"><use href="#edit"/></svg></button></div>
    <div class="navlist d-flex flex-grow-1 overflow-hidden">
      <nav class="items">
        <a href="#" class="nh">轴线</a><a href="#" class="nh">给排水</a><a href="#" class="nh">采暖燃气</a><a href="#" class="nh">电气</a>
        <a href="#" class="ni active"><svg class="ico ico24"><use href="#n1"/></svg>照明灯具(电)(D)</a>
        <a href="#" class="ni"><svg class="ico ico24"><use href="#n2"/></svg>开关插座(电)(K)</a>
        <a href="#" class="ni"><svg class="ico ico24"><use href="#n3"/></svg>配电箱柜(电)(P)</a>
        <a href="#" class="ni"><svg class="ico ico24"><use href="#n4"/></svg>电气设备(电)(S)</a>
        <a href="#" class="ni"><svg class="ico ico24"><use href="#n5"/></svg>桥架(电)(W)</a>
        <a href="#" class="ni"><svg class="ico ico24"><use href="#n6"/></svg>电线导管(电)(X)</a>
        <a href="#" class="ni"><svg class="ico ico24"><use href="#n7"/></svg>电缆导管(电)(L)</a>
        <a href="#" class="ni"><svg class="ico ico24"><use href="#n8"/></svg>综合管线(电)(Z)</a>
        <a href="#" class="ni"><svg class="ico ico24"><use href="#n9"/></svg>母线(电)(I)</a>
        <a href="#" class="ni"><svg class="ico ico24"><use href="#n10"/></svg>防雷接地(电)(J)</a>
        <a href="#" class="ni"><svg class="ico ico24"><use href="#n11"/></svg>桥架通头(电)(R)</a>
        <a href="#" class="ni"><svg class="ico ico24"><use href="#n12"/></svg>零星构件(电)(A)</a>
        <a href="#" class="ni"><svg class="ico ico24"><use href="#n13"/></svg>支架(电)(N)</a>
        <a href="#" class="nh">消防</a><a href="#" class="nh">通风空调</a><a href="#" class="nh">智控弱电</a><a href="#" class="nh">工业管道</a><a href="#" class="nh">建筑结构</a>
      </nav>
      <div class="sb" style="margin:15px 0 0 3px;height:652px"></div>
    </div>
  </aside>
  <div class="gapl flex-shrink-0"></div>

  <div class="listcol d-flex flex-column flex-shrink-0">
    <section class="pane d-flex flex-column flex-grow-1 overflow-hidden" style="margin-bottom:6px">
      <div class="strip d-flex align-items-center justify-content-end"><button aria-label="关闭"><svg class="ico"><use href="#x"/></svg></button></div>
      <div class="ptitle d-flex align-items-center">构件列表</div>
      <div class="pbar d-flex align-items-center text-nowrap ps-1" style="column-gap:9px">
        <button><svg class="ico"><use href="#new"/></svg>新建<span class="dn ms-1"></span></button>
        <button><svg class="ico"><use href="#bin"/></svg>删除</button>
        <button><svg class="ico"><use href="#copy"/></svg>复制</button>
        <button><svg class="ico"><use href="#lib"/></svg>构件库</button>
        <button class="more" aria-label="更多"><span class="tri rt"></span><span class="tri rt"></span></button>
      </div>
      <label class="psearch d-flex align-items-center"><input class="flex-grow-1 p-0" placeholder="搜索构件..." aria-label="搜索构件"><svg class="ico"><use href="#mag"/></svg></label>
      <div class="d-flex flex-grow-1 overflow-hidden">
        <nav class="comps d-flex flex-column">
          <a href="#" class="active"><i>[已用]</i>消防控制室标志灯 [荧光灯</a>
          <a href="#"><i>[已用]</i>21.座灯 [荧光灯 220V 36W</a>
          <a href="#"><i>[已用]</i>27.LED吸顶灯,自带声光控延时</a>
          <a href="#"><i>[已用]</i>33.防水防潮LED灯EN [荧光灯</a>
          <a href="#"><i>[已用]</i>35.双管条形LED灯 [荧光灯</a>
          <a href="#"><i>[已用]</i>36.单管条形LED灯 [荧光灯</a>
          <a href="#"><i>[已用]</i>36.壁装单管条形LED灯 [荧光灯</a>
          <a href="#"><i>[已用]</i>39.应急照明灯 [荧光灯 220V</a>
          <a href="#"><i>[已用]</i>42.应急照明灯2 [荧光灯 220V</a>
          <a href="#"><i>[已用]</i>43.应急照明灯1 [荧光灯 220V</a>
          <a href="#"><i class="un">[未用]</i>46.安全出口标志灯AE [荧光灯</a>
        </nav>
        <div class="sb" style="margin:47px 0 0 4px;height:148px"></div>
      </div>
      <div class="d-flex align-items-center flex-shrink-0" style="height:18px;padding:0 23px 0 6px"><span class="tri l"></span><span class="sbh" style="width:161px;margin-left:5px"></span><span class="tri rt ms-auto"></span></div>
    </section>
    <section class="pane flex-shrink-0">
      <div class="strip d-flex align-items-center justify-content-end"><button aria-label="关闭"><svg class="ico"><use href="#x"/></svg></button></div>
      <div class="ptitle d-flex align-items-center">属性</div>
      <div class="d-flex" style="padding-bottom:5px;margin-left:-1px">
      <table class="table grid props"><colgroup><col style="width:28px"><col style="width:143px"><col style="width:129px"></colgroup>
        <thead><tr><th></th><th>属性名称</th><th>属性值</th></tr></thead>
        <tbody>
        <tr><td class="no pe-2">9</td><td>汇总信息</td><td>照明灯具(电)</td></tr>
        <tr><td class="no">10</td><td>回路编号</td><td>N1</td></tr>
        <tr><td class="no">11</td><td>是否计量</td><td>是</td></tr>
        <tr><td class="no">12</td><td>乘以标准间数量</td><td>是</td></tr>
        <tr><td class="no">13</td><td>倍数</td><td>1</td></tr>
        <tr><td class="no">14</td><td>图元楼层归属</td><td>默认</td></tr>
        <tr><td class="no">15</td><td>备注</td><td>E03</td></tr>
        <tr><td class="no">16</td><td class="exp"><span class="pm"><svg viewBox="0 0 8 8"><path d="M0 4h8M4 0v8"/></svg></span>显示样式</td><td></td></tr>
        <tr><td class="no">19</td><td>分组属性</td><td style="color:#999">灯具</td></tr>
        <tr><td class="no">20</td><td class="exp"><span class="pm"><svg viewBox="0 0 8 8"><path d="M0 4h8M4 0v8"/></svg></span>材料价格</td><td></td></tr>
        </tbody></table>
        <div class="sb" style="margin:132px 0 0 7px;height:144px"></div>
      </div>
    </section>
    <div class="d-flex flex-shrink-0" style="gap:8px;padding-top:1px"><button class="pbtn">图例</button><button class="pbtn">实体模型</button><button class="pbtn">提属性</button></div>
  </div>
  <div class="gapl flex-shrink-0"><div class="grip d-flex align-items-center justify-content-center"><span class="tri l" style="border-width:4px 4px 4px 0;border-right-color:#cdd2d8"></span></div></div>

  <section class="stage flex-grow-1">
    <svg viewBox="515 211 1002 830" preserveAspectRatio="xMidYMid slice" fill="none">
      <g stroke="#5d5a4d" stroke-width="2"><path d="M757.500 238V1041M1382 238V1041" stroke-dasharray="165 17 2 17"/><path d="M482 960H1517" stroke-dasharray="165 17 2 17"/></g>
      <path d="M515 211.500H1517M515.500 211V1041" stroke="#55534a"/>
      <g fill="#8d897a" stroke="#b9b6a8"><rect x="724" y="190" width="67" height="54"/><rect x="724" y="927" width="67" height="67"/><circle cx="1382" cy="210" r="38"/><circle cx="1382" cy="960" r="38"/></g>
      <path d="M1515.500 672V1041" stroke="#8d897a"/>
      <path d="M1514 797h3M1514 922h3M1514 997h3" stroke="#d012c0" stroke-width="6"/>
      <text x="927" y="427" font-size="15" fill="#8d897a">配套服务用房</text>
      <path d="M1284 379L1495 585" stroke="#d01c10" stroke-width="1.500"/>
      <g fill="#1fd2ee"><circle cx="641" cy="926" r="11"/><circle cx="1232" cy="327" r="11"/><circle cx="1232" cy="926" r="11"/></g>
      <g fill="#8b86ea"><circle cx="641" cy="926" r="7"/><circle cx="1232" cy="327" r="7"/><circle cx="1232" cy="926" r="7"/><circle cx="1505" cy="585" r="7"/></g>
      <g stroke="#1a97a8" stroke-width="1.500"><path d="M620 905l13 13M662 905l-13 13M620 947l13-13M662 947l-13-13M1211 306l13 13M1253 306l-13 13M1211 348l13-13M1211 905l13 13M1253 905l-13 13M1211 947l13-13M1253 947l-13-13"/><rect x="1495.500" y="560.500" width="20" height="50"/></g>
      <path d="M641 327H1232M1232.500 211V926M1232 926H641M1232 327L1505 585" stroke="#8fb3ea" stroke-width="5" stroke-linecap="round"/>
      <circle cx="641" cy="327" r="11" fill="#1e88ea"/><path d="M620 306l13 13M662 306l-13 13M620 348l13-13M662 348l-13-13" stroke="#1a6fb5" stroke-width="1.500"/>
      <path d="M633 319h16v16h-16z" fill="#0f0"/>
      <path d="M620.500 314v-8h9M654 306h8.500v9M662.500 340v8h-9M628 348h-7.500v-9" stroke="#cfccbd" stroke-width="1.500"/>
      <g font-size="34" font-weight="300" fill="#1a97a8"><text x="665" y="352" fill="#1a70b8">2</text><text x="1256" y="333">2</text><text x="665" y="952">2</text><text x="1256" y="952">2</text></g>
      <path d="M577 974V955" stroke="#0f0" stroke-width="5"/><path d="M577 941l6 15h-12z" fill="#0f0"/>
      <path d="M583 979h18" stroke="#f00" stroke-width="5"/><path d="M615 979l-15-6v12z" fill="#f00"/>
      <circle cx="577" cy="979" r="7" fill="#0000b8"/>
      <text x="571" y="941" font-size="20" fill="#0f0">Y</text><text x="616" y="986" font-size="20" fill="#f00">X</text>
    </svg>
    <div class="float">
      <button aria-label="动态观察"><svg class="ico ico26"><use href="#orbit"/></svg></button>
      <button aria-label="三维" class="position-relative"><svg class="ico ico26"><use href="#cube"/></svg><span class="tag3d position-absolute start-0 bottom-0 ps-1 fw-bold">3D</span></button>
      <button class="set" aria-label="俯视"><svg class="ico ico26"><use href="#cubet"/></svg><span class="dn dk"></span></button>
      <button class="set" aria-label="实体"><svg class="ico ico26"><use href="#cubeb"/></svg><span class="dn dk"></span></button>
      <button class="set" aria-label="旋转"><svg class="ico ico26"><use href="#rotb"/></svg><span class="dn dk"></span></button>
      <hr>
      <button aria-label="显示设置"><svg class="ico ico26"><use href="#eye"/></svg></button>
    </div>
  </section>
  <div class="gapr flex-shrink-0"><div class="grip d-flex align-items-center justify-content-center"><span class="tri rt" style="border-width:4px 0 4px 4px;border-left-color:#cdd2d8"></span></div></div>

  <div class="rightcol d-flex flex-column flex-shrink-0">
    <section class="pane d-flex flex-column flex-grow-1 overflow-hidden" style="margin-bottom:7px">
      <div class="strip d-flex align-items-center justify-content-end"><button aria-label="关闭"><svg class="ico"><use href="#x"/></svg></button></div>
      <div class="ptitle d-flex align-items-center">图纸管理</div>
      <div class="pbar d-flex align-items-center text-nowrap" style="padding-left:6px;column-gap:7px">
        <button><svg class="ico"><use href="#addpg"/></svg>添加</button>
        <button class="off"><svg class="ico"><use href="#loc"/></svg>定位<span class="dn ms-1"></span></button>
        <button class="off"><svg class="ico"><use href="#pa"/></svg>手动分割<span class="dn ms-1"></span></button>
        <button><svg class="ico"><use href="#pcopy"/></svg>复制</button>
        <button class="more" aria-label="更多"><span class="tri rt"></span><span class="tri rt"></span></button>
      </div>
      <label class="psearch d-flex align-items-center" style="height:31px;margin-bottom:1px"><input class="flex-grow-1 p-0" placeholder="搜索图纸..." aria-label="搜索图纸"><svg class="ico"><use href="#mag"/></svg></label>
      <div class="d-flex">
      <table class="table grid draws"><colgroup><col style="width:28px"><col style="width:139px"><col style="width:64px"><col style="width:89px"><col style="width:57px"></colgroup>
        <thead><tr><th></th><th class="hd">图纸名称</th><th>比例</th><th>楼层</th><th>楼层编号</th></tr></thead>
        <tbody>
        <tr><td class="no">13</td><td class="l0"><span class="pm"><svg viewBox="0 0 8 8"><path d="M1 4h6"/></svg></span>首层照明平面...</td><td></td><td></td><td></td></tr>
        <tr><td class="no">14</td><td class="l1"><span class="pm"><svg viewBox="0 0 8 8"><path d="M1 4h6"/></svg></span>模型</td><td>1:1</td><td>基础层</td><td></td></tr>
        <tr><td class="no">15</td><td class="l2">首层照明</td><td>1:1</td><td>首层</td><td>1.2</td></tr>
        <tr><td class="no">16</td><td class="l0"><span class="pm"><svg viewBox="0 0 8 8"><path d="M1 4h6"/></svg></span>地下一层照明...</td><td></td><td></td><td></td></tr>
        <tr><td class="no">17</td><td class="l1"><span class="pm"><svg viewBox="0 0 8 8"><path d="M1 4h6"/></svg></span>模型</td><td>1:1</td><td>基础层</td><td></td></tr>
        <tr><td class="no">18</td><td class="l2">B1照明</td><td>1:1</td><td>第-1层</td><td>-1.2</td></tr>
        <tr><td class="no">19</td><td class="l0"><span class="pm"><svg viewBox="0 0 8 8"><path d="M1 4h6"/></svg></span>低压配电系统...</td><td></td><td></td><td></td></tr>
        <tr><td class="no">20</td><td class="l1 leaf">模型</td><td>1:1</td><td>基础层</td><td></td></tr>
        <tr><td class="no">21</td><td class="l0"><span class="pm"><svg viewBox="0 0 8 8"><path d="M1 4h6"/></svg></span>接地平面图_t...</td><td></td><td></td><td></td></tr>
        <tr><td class="no">22</td><td class="l1"><span class="pm"><svg viewBox="0 0 8 8"><path d="M1 4h6"/></svg></span>模型</td><td>1:1</td><td>基础层</td><td></td></tr>
        <tr><td class="no">23</td><td class="l2">接地平面图</td><td>1:1</td><td>第-1层</td><td>-1.3</td></tr>
        <tr><td class="no">24</td><td class="l0"><span class="pm"><svg viewBox="0 0 8 8"><path d="M1 4h6"/></svg></span>防雷平面图_t...</td><td></td><td></td><td></td></tr>
        <tr><td class="no">25</td><td class="l1"><span class="pm"><svg viewBox="0 0 8 8"><path d="M1 4h6"/></svg></span>模型</td><td>1:1</td><td>基础层</td><td></td></tr>
        <tr><td class="no">26</td><td class="l2">防雷平面图</td><td>1:1</td><td>首层</td><td>1.3</td></tr>
        <tr><td class="no">27</td><td class="l0"><span class="pm"><svg viewBox="0 0 8 8"><path d="M1 4h6"/></svg></span>图纸-1.dwg</td><td></td><td></td><td></td></tr>
        <tr><td class="no">28</td><td class="l1"><span class="pm"><svg viewBox="0 0 8 8"><path d="M1 4h6"/></svg></span>模型</td><td>1:1</td><td>第-2层</td><td></td></tr>
        <tr class="cur"><td class="no hd">29</td><td class="l2">B2照明新图</td><td>1:1</td><td>第-2层</td><td>-2.2</td></tr>
        </tbody></table>
        <div class="sb" style="margin:204px 0 0 4px;height:261px"></div>
      </div>
      <div class="d-flex align-items-center flex-grow-1" style="padding:8px 24px 0 7px"><span class="tri l"></span><span class="sbh" style="width:255px;margin-left:6px"></span><span class="tri rt ms-auto"></span></div>
    </section>
    <section class="d-flex flex-column flex-shrink-0" style="min-height:214px">
      <div class="strip d-flex align-items-center justify-content-end"><button aria-label="关闭"><svg class="ico"><use href="#x"/></svg></button></div>
      <div class="ptitle d-flex align-items-center fw-semibold">CAD图层</div>
      <div class="layerbar pane d-flex align-items-center text-nowrap flex-shrink-0 rounded-bottom">
        <button class="d-flex align-items-center gap-2">选择相同颜色<span class="dn"></span></button>
        <button class="d-flex align-items-center gap-2">显示CAD图层<span class="dn"></span></button>
        <button class="d-flex align-items-center gap-2">显示CAD图元<span class="dn"></span></button>
      </div>
      <div class="pane border-top flex-grow-1" style="margin-top:7px">
      <table class="table grid layers" style="margin-left:-1px"><colgroup><col style="width:63px"><col style="width:45px"><col style="width:190px"></colgroup>
        <thead><tr><th>开/关</th><th>颜色</th><th>名称</th></tr></thead>
        <tbody>
        <tr><td><input type="checkbox" class="ck part" aria-label="已提取的CAD图层"></td><td><span class="tri rt"></span></td><td>已提取的CAD图层</td></tr>
        <tr><td class="ckw"><input type="checkbox" class="ck yes" checked aria-label="CAD原始图层"><svg viewBox="0 0 14 14"><path d="M2 7l4 4 6-8"/></svg></td><td><span class="tri rt"></span></td><td>CAD原始图层</td></tr>
        </tbody></table>
      </div>
    </section>
  </div>
</main>

<footer class="status d-flex align-items-center flex-shrink-0 text-nowrap">
  <span class="s1">层高：6</span><span class="s2">底标高：-11.833</span><span class="s3">选中图元：1(247)</span><span class="s4">隐藏图元：0</span>
  <div class="tools d-flex">
    <button class="sbtn" aria-label="查找"><svg class="ico"><use href="#t1"/></svg></button>
    <button class="sbtn" aria-label="正交"><svg class="ico"><use href="#t2"/></svg></button>
    <button class="sbtn dd on" aria-label="端点"><svg class="ico"><use href="#t3"/></svg><span class="dn dk"></span></button>
    <button class="sbtn dd" aria-label="视角"><svg class="ico"><use href="#t4"/></svg><span class="dn dk"></span></button>
    <button class="sbtn" aria-label="交点"><svg class="ico"><use href="#t5"/></svg></button>
    <button class="sbtn dd" aria-label="角度"><svg class="ico"><use href="#t6"/></svg><span class="dn dk"></span></button>
    <button class="sbtn dd" aria-label="偏移"><svg class="ico"><use href="#t7"/></svg><span class="dn dk"></span></button>
    <button class="sbtn" aria-label="选择框"><svg class="ico"><use href="#t8"/></svg></button>
    <button class="sbtn" aria-label="曲线"><svg class="ico"><use href="#t9"/></svg></button>
  </div>
  <span class="s5 ms-2">CAD图亮度：100%</span>
  <button class="sbtn" aria-label="调暗"><svg class="ico"><use href="#zo"/></svg></button>
  <input type="range" class="bright" value="100" aria-label="CAD图亮度">
  <button class="sbtn" aria-label="调亮"><svg class="ico"><use href="#zi"/></svg></button>
  <svg class="ico ms-2 me-1"><use href="#diag"/></svg>
  <span>按鼠标左键指定第一个角点，或拾取构件图元</span>
</footer>
</body>
</html>
